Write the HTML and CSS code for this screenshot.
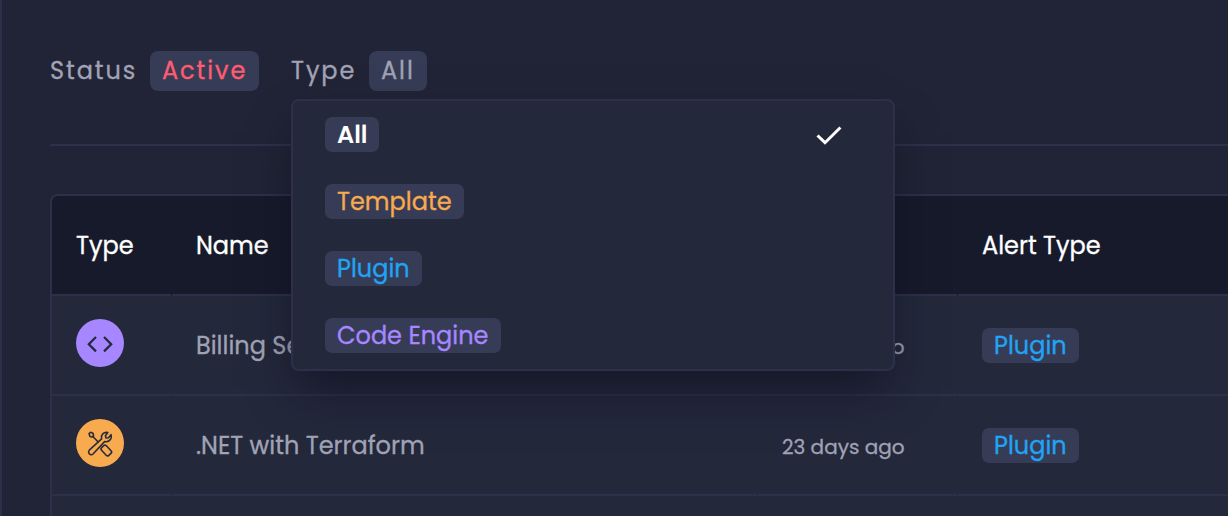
FILE: index.html
```html
<!DOCTYPE html>
<html lang="en">
<head>
<meta charset="utf-8">
<title>Alerts</title>
<link rel="stylesheet" href="styles.css">
</head>
<body>
<main class="page">
  <div class="filters">
    <div class="filter"><span class="label status">Status</span><span class="value active">Active</span></div>
    <div class="filter type-filter">
      <span class="label type">Type</span><span class="value all">All</span>
      <div class="menu">
        <div class="option"><span class="chip chip-all"><b>All</b></span>
          <svg class="check" width="28" height="22" viewBox="0 0 28 22"><path d="M2.500 11.500l7.500 7.200L25.400 3.500" fill="none" stroke="#fff" stroke-width="3"/></svg>
        </div>
        <div class="option"><span class="chip chip-template"><span>Template</span></span></div>
        <div class="option"><span class="chip chip-plugin"><span>Plugin</span></span></div>
        <div class="option"><span class="chip chip-code"><span>Code Engine</span></span></div>
      </div>
    </div>
  </div>
  <div class="table">
    <div class="row head">
      <div class="cell"><span>Type</span></div>
      <div class="cell"><span>Name</span></div>
      <div class="cell"></div>
      <div class="cell"><span>Alert Type</span></div>
    </div>
    <div class="row">
      <div class="cell">
        <svg class="icon" width="48" height="48" viewBox="0 0 48 48"><circle cx="24" cy="24" r="24" fill="#a687ff"/><path d="M20 18l-7.200 7.200L20 32.400M28 18l7.200 7.200L28 32.400" fill="none" stroke="#23283b" stroke-width="2.200"/></svg>
      </div>
      <div class="cell"><span>Billing Se</span></div>
      <div class="cell time"><span>23 days ago</span></div>
      <div class="cell"><span class="chip chip-plugin"><span>Plugin</span></span></div>
    </div>
    <div class="row">
      <div class="cell">
        <svg class="icon" width="48" height="48" viewBox="0 0 48 48"><circle cx="24" cy="24" r="24" fill="#f8aa4f"/><g fill="none" stroke="#2b2c3b" stroke-width="1.600" stroke-linejoin="round" stroke-linecap="round"><path d="M13 14.500L14.500 13.300L17 14.200L17.600 16.600L16.300 18L14 17.400ZM17.300 18L22.200 23"/><path d="M13.300 31.200L25.600 19.900C24.500 16 27.700 12.600 31.800 13.500L29.400 16.800L30 19L32.400 18.800L35 15.700C36.200 20.200 32.700 23.500 28.600 22.600L17 35C15.600 36.400 13.600 35.600 12.900 34.200C12.300 33 12.500 32 13.300 31.200Z"/><rect x="-4.600" y="-3.300" width="10.600" height="6.600" rx="1.900" transform="translate(29.800 31) rotate(47)"/></g></svg>
      </div>
      <div class="cell"><span>.NET with Terraform</span></div>
      <div class="cell time"><span>23 days ago</span></div>
      <div class="cell"><span class="chip chip-plugin"><span>Plugin</span></span></div>
    </div>
    <div class="row"><div class="cell"></div><div class="cell"></div><div class="cell"></div><div class="cell"></div></div>
  </div>
</main>
</body>
</html>
```
FILE: styles.css
```css
* { box-sizing: border-box; }
body {
  margin: 0;
  height: 516px;
  overflow: hidden;
  background: #212436;
  color: #a1a3b5;
  font: 24px/34px Poppins, Inter, sans-serif;
  -webkit-text-stroke: .3px currentColor;
}
.page { height: 516px; padding: 51px 0 0 48px; border-left: 2px solid #2c3149; overflow: hidden; }
.filters { display: flex; gap: 32px; height: 95px; border-bottom: 2px solid #2c3149; }
.filter { display: flex; position: relative; height: 40px; line-height: 40px; white-space: nowrap; }
.label { letter-spacing: 1.92px; }
.status { width: 100px; }
.type { width: 78px; }
.value { background: #373c56; border-radius: 8px; padding-left: 12px; letter-spacing: 1.92px; }
.active { width: 109px; color: #ff5c72; }
.all { width: 58px; }
.menu {
  position: absolute;
  z-index: 2;
  left: 0;
  top: 48px;
  width: 604px;
  height: 272px;
  padding: 0 50px 0 32px;
  background: #23283b;
  border: 2px solid #2c3149;
  border-radius: 8px;
  box-shadow: 0 24px 44px -8px rgba(13, 12, 28, .62);
}
.option { display: flex; align-items: center; justify-content: space-between; height: 67px; }
.chip { display: block; height: 35px; border-radius: 7px; background: #373c56; padding-left: 12px; line-height: 35px; white-space: nowrap; }
.chip-all { width: 54px; color: #fff; }
.chip-all b { font-weight: 600; -webkit-text-stroke: 0; }
.chip-template { width: 139px; color: #f8aa4f; }
.chip-plugin { width: 97px; color: #20a4f5; }
.chip-code { width: 176px; color: #a687ff; }
.table { margin-top: 48px; border: 2px solid #2c3149; border-right: 0; border-radius: 8px 0 0; overflow: hidden; background: #23283b; }
.row { display: grid; grid-template-columns: 119px 585px 199px 1fr; column-gap: 1px; height: 100px; }
.cell { display: flex; align-items: center; border-bottom: 2px solid #2c3149; padding-left: 24px; white-space: nowrap; }
.cell > span:not(.chip) { padding-top: 2px; }
.head { background: #171a2b; color: #fff; }
.icon { margin-top: -4px; }
.time { font-size: 20px; padding-top: 1px; }
```
